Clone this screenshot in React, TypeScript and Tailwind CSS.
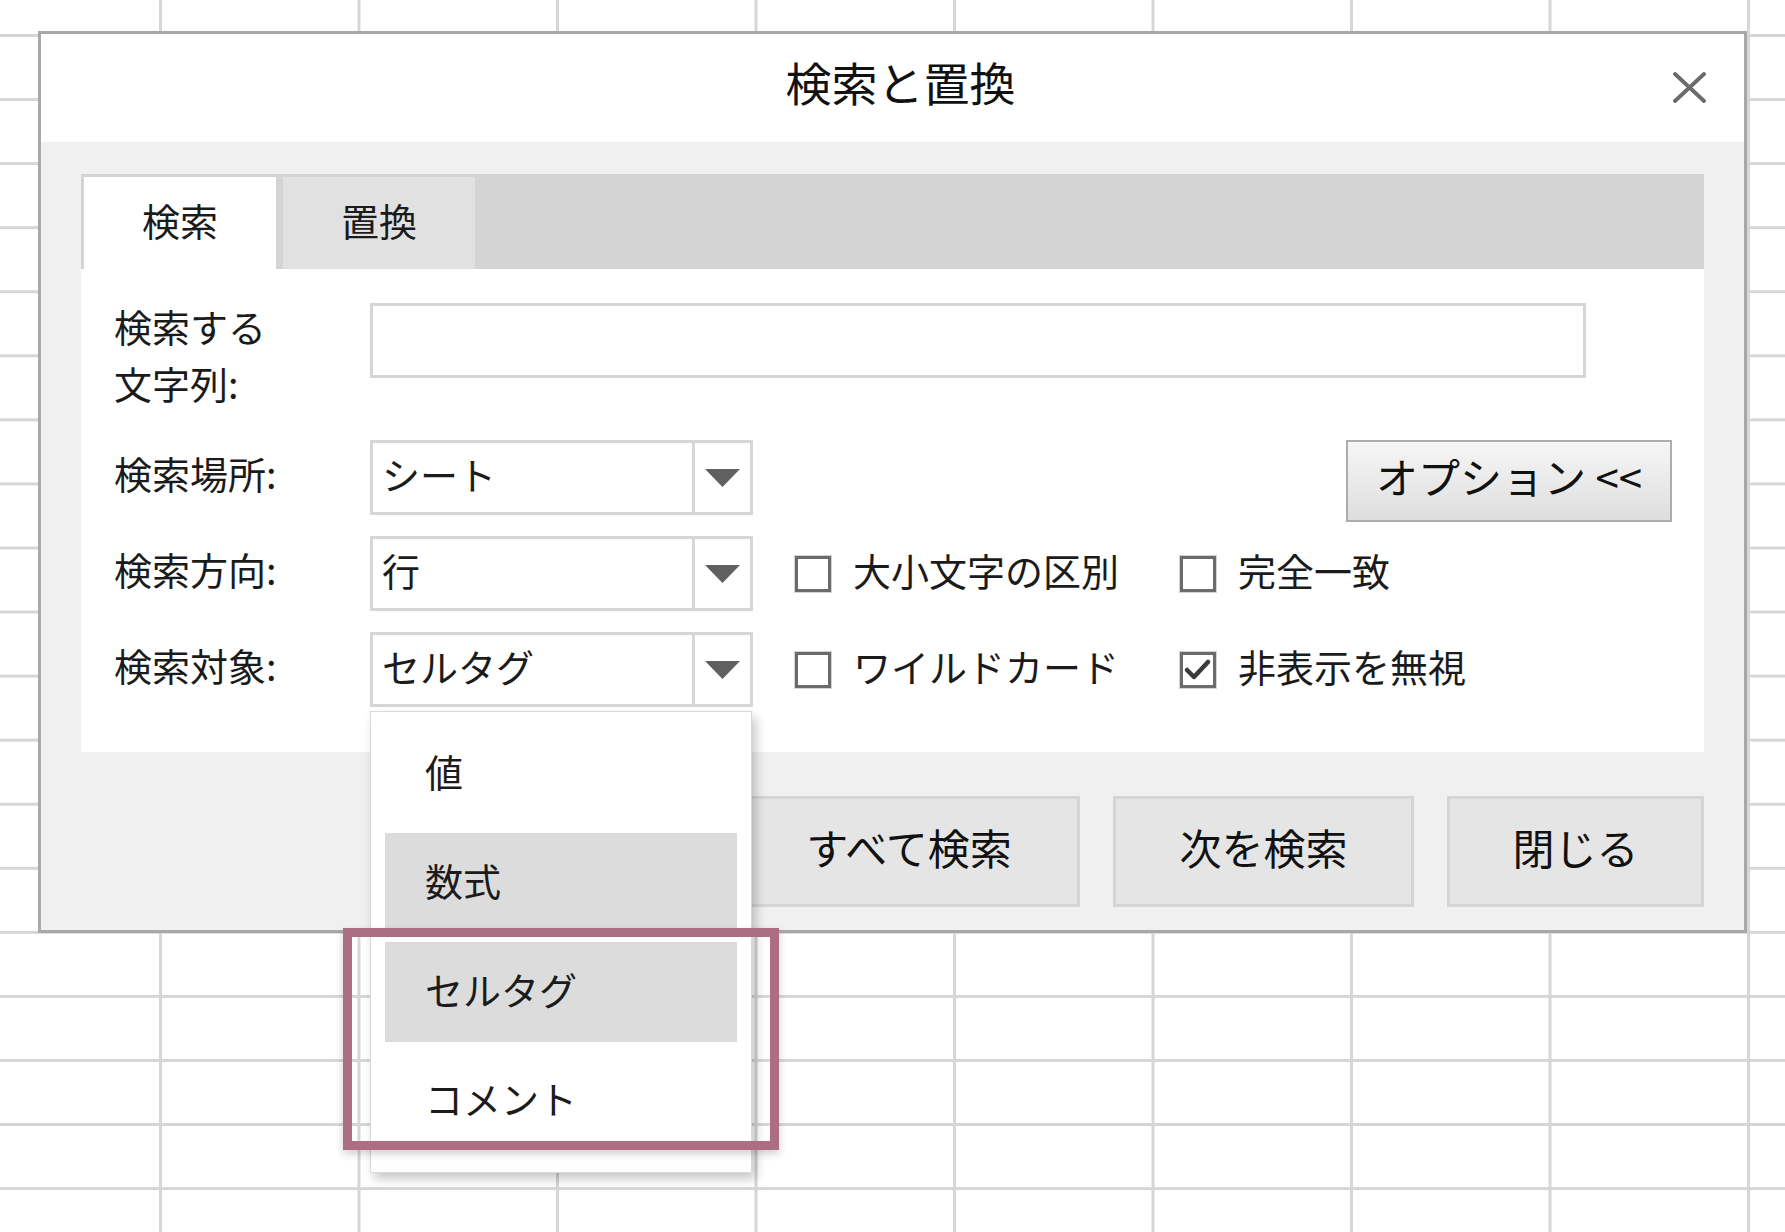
import React from "react";

const FONT = "font-['Noto_Sans_CJK_JP','Noto_Sans_CJK_SC',sans-serif]";

function Select({ value }: { value: string }) {
  return (
    <div className="flex h-[75px] w-[383px] border-[3px] border-[#d6d6d6] bg-white">
      <div className="flex flex-1 items-center pb-[7px] pl-[9px] text-[38px] leading-none text-[#1b1b1b]">
        {value}
      </div>
      <div className="flex w-[58px] items-center justify-center border-l-[3px] border-[#d6d6d6]">
        <svg width="35" height="18" viewBox="0 0 35 18">
          <polygon points="0,0 35,0 17.5,18" fill="#606060" />
        </svg>
      </div>
    </div>
  );
}

function Checkbox({ label, checked }: { label: string; checked?: boolean }) {
  return (
    <div className="flex w-[385px] items-center gap-[22px]">
      <div className="flex h-[36px] w-[36px] items-center justify-center border-[3px] border-[#6b6b6b] bg-white ring-1 ring-[#d2d2d2]">
        {checked && (
          <svg width="30" height="30" viewBox="0 0 30 30">
            <polyline
              points="4,15 11,22 25,7"
              fill="none"
              stroke="#3a3a3a"
              strokeWidth="4.5"
              strokeLinecap="round"
              strokeLinejoin="round"
            />
          </svg>
        )}
      </div>
      <span className="pb-[8px] text-[38px] leading-none text-[#1b1b1b]">{label}</span>
    </div>
  );
}

function Label({ children }: { children: React.ReactNode }) {
  return (
    <div className="w-[256px] shrink-0 pb-[9px] text-[38px] leading-none text-[#1b1b1b]">
      {children}
    </div>
  );
}

const options = [
  { name: "値", active: false },
  { name: "数式", active: true },
  { name: "セルタグ", active: true },
  { name: "コメント", active: false },
];

const footerButtons = [
  { name: "すべて検索", width: "w-[342px]" },
  { name: "次を検索", width: "w-[301px]" },
  { name: "閉じる", width: "w-[257px]" },
];

export default function App() {
  return (
    <div
      className={`${FONT} h-[1232px] w-[1785px] overflow-hidden bg-white bg-[linear-gradient(to_right,#d6d6d6_3px,transparent_3px),linear-gradient(to_bottom,#d6d6d6_3px,transparent_3px)] bg-size-[198.5px_64.07px] bg-position-[159px_34px] pl-[38px] pt-[31px]`}
    >
      <div className="h-[902px] w-[1709px] border-[3px] border-[#a8a8a8] bg-white">
        {/* title */}
        <div className="relative flex h-[108px] items-center justify-center pb-[14px] pl-[16px]">
          <h1 className="text-[46px] font-normal leading-none text-[#111]">検索と置換</h1>
          <button className="absolute right-[38px] top-[38px]">
            <svg width="33" height="31" viewBox="0 0 33 31">
              <path
                d="M2 2 L31 29 M31 2 L2 29"
                stroke="#6b6b6b"
                strokeWidth="3.8"
                strokeLinecap="round"
              />
            </svg>
          </button>
        </div>

        {/* body */}
        <div className="h-[788px] bg-[#f0f0f0] px-[40px] pt-[32px]">
          <div className="flex h-[95px] gap-[7px] bg-[#d4d4d4] pl-[3px] pt-[3px]">
            <div className="flex w-[192px] items-center justify-center bg-white pb-[6px] text-[38px] leading-none text-[#1b1b1b]">
              検索
            </div>
            <div className="flex w-[192px] items-center justify-center bg-[#e1e1e1] pb-[6px] text-[38px] leading-none text-[#1b1b1b]">
              置換
            </div>
          </div>

          <div className="h-[483px] bg-white pl-[33px] pt-[31px]">
            <div className="flex h-[114px] items-start">
              <div className="-mt-[3px] w-[256px] shrink-0 text-[38px] leading-[57px] text-[#1b1b1b]">
                検索する
                <br />
                文字列:
              </div>
              <div className="mt-[3px] h-[75px] w-[1216px] border-[3px] border-[#d6d6d6] bg-white" />
            </div>

            <div className="mt-[26px] flex h-[75px] items-center">
              <Label>検索場所:</Label>
              <Select value="シート" />
              <button className="ml-auto mr-[32px] h-[82px] w-[326px] self-start border-2 border-[#adadad] bg-gradient-to-b from-[#f6f6f6] to-[#dedede] pb-[10px] text-[42px] leading-none text-[#111]">
                オプション &lt;&lt;
              </button>
            </div>

            <div className="mt-[21px] flex h-[75px] items-center">
              <Label>検索方向:</Label>
              <Select value="行" />
              <div className="ml-[42px] flex">
                <Checkbox label="大小文字の区別" />
                <Checkbox label="完全一致" />
              </div>
            </div>

            <div className="mt-[21px] flex h-[75px] items-center">
              <Label>検索対象:</Label>
              <div className="relative">
                <Select value="セルタグ" />
                <div className="absolute left-0 top-[79px] z-10 h-[462px] w-[382px] border border-[#d9d9d9] bg-white pt-[12px] shadow-[4px_6px_10px_rgba(0,0,0,0.22)]">
                  <div className="flex flex-col gap-[9px] px-[14px]">
                    {options.map((o) => (
                      <div
                        key={o.name}
                        className={`flex h-[100px] items-center pb-[6px] pl-[40px] text-[38px] leading-none text-[#1b1b1b] ${
                          o.active ? "bg-[#dcdcdc]" : ""
                        }`}
                      >
                        {o.name}
                      </div>
                    ))}
                  </div>
                  <div className="absolute left-[-28px] top-[216px] h-[222px] w-[436px] border-[9px] border-[#ad6d83] shadow-[0_4px_8px_rgba(0,0,0,0.18)]" />
                </div>
              </div>
              <div className="ml-[42px] flex">
                <Checkbox label="ワイルドカード" />
                <Checkbox label="非表示を無視" checked />
              </div>
            </div>
          </div>

          <div className="mt-[44px] flex justify-end gap-[33px]">
            {footerButtons.map((b) => (
              <button
                key={b.name}
                className={`${b.width} h-[111px] border-[3px] border-[#d5d5d5] bg-[#e5e5e5] pb-[10px] text-[42px] leading-none text-[#111]`}
              >
                {b.name}
              </button>
            ))}
          </div>
        </div>
      </div>
    </div>
  );
}
